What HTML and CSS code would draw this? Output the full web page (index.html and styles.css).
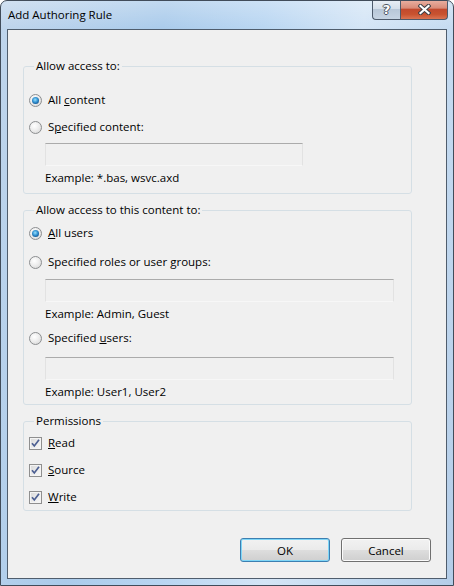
FILE: index.html
```html
<!DOCTYPE html>
<html>
<head>
<meta charset="utf-8">
<link rel="stylesheet" href="styles.css">
</head>
<body>
<div class="window">
  <div class="titlebar">
    <span class="title">Add Authoring Rule</span>
    <div class="caption-btns">
      <div class="cbtn help">?</div>
      <div class="cbtn close">
        <svg width="13" height="11" viewBox="0 0 13 11">
          <path d="M2.5 2 L10.5 9 M10.5 2 L2.5 9" stroke="#3b3f46" stroke-width="4.2" stroke-linecap="square" fill="none"/>
          <path d="M2.5 2 L10.5 9 M10.5 2 L2.5 9" stroke="#ffffff" stroke-width="2.2" stroke-linecap="square" fill="none"/>
        </svg>
      </div>
    </div>
  </div>
  <div class="client">
    <fieldset class="group g1">
      <legend>Allow access to:</legend>
      <div class="row r-first1"><span class="radio on"></span><span>All <u>c</u>ontent</span></div>
      <div class="row r-next"><span class="radio"></span><span>S<u>p</u>ecified content:</span></div>
      <div class="input w1"></div>
      <div class="example">Example: *.bas, wsvc.axd</div>
    </fieldset>

    <fieldset class="group g2">
      <legend>Allow access to this content to:</legend>
      <div class="row r-first2"><span class="radio on"></span><span><u>A</u>ll users</span></div>
      <div class="row r-roles"><span class="radio"></span><span>Specified roles or user <u>g</u>roups:</span></div>
      <div class="input w2 i-roles"></div>
      <div class="example">Example: Admin, Guest</div>
      <div class="row r-users"><span class="radio"></span><span>Specified <u>u</u>sers:</span></div>
      <div class="input w2 i-users"></div>
      <div class="example">Example: User1, User2</div>
    </fieldset>

    <fieldset class="group g3">
      <legend>Permissions</legend>
      <div class="row r-first3"><span class="check"><svg width="11" height="11" viewBox="0 0 11 11"><path d="M2 5.2 L4.3 8 L9 1.8" stroke="#4c5f92" stroke-width="1.7" fill="none"/></svg></span><span><u>R</u>ead</span></div>
      <div class="row r-chk"><span class="check"><svg width="11" height="11" viewBox="0 0 11 11"><path d="M2 5.2 L4.3 8 L9 1.8" stroke="#4c5f92" stroke-width="1.7" fill="none"/></svg></span><span><u>S</u>ource</span></div>
      <div class="row r-chk"><span class="check"><svg width="11" height="11" viewBox="0 0 11 11"><path d="M2 5.2 L4.3 8 L9 1.8" stroke="#4c5f92" stroke-width="1.7" fill="none"/></svg></span><span><u>W</u>rite</span></div>
    </fieldset>

    <div class="buttons">
      <button class="btn default">OK</button>
      <button class="btn">Cancel</button>
    </div>
  </div>
</div>
</body>
</html>
```

FILE: styles.css
```css
* { box-sizing: border-box; }
html, body { margin: 0; padding: 0; }
body {
  width: 454px;
  height: 586px;
  background: #ffffff;
  font-family: "Open Sans", "Noto Sans", sans-serif;
  font-size: 11.5px;
  line-height: 16px;
  color: #000;
}
.window {
  width: 454px;
  height: 586px;
  border: 1px solid #414c5a;
  border-radius: 7px 7px 0 0;
  display: flex;
  flex-direction: column;
  background:
    linear-gradient(to bottom, rgba(255,255,255,0.28), rgba(255,255,255,0) 28px),
    linear-gradient(100deg, #bfd5ec 0%, #aacbeb 30%, #b9d6f2 48%, #d4e5f6 66%, #c5dbf1 82%, #b4cde8 100%);
  overflow: hidden;
}
.titlebar {
  height: 28px;
  display: flex;
  align-items: flex-start;
  justify-content: space-between;
  padding-left: 7px;
  padding-right: 5px;
}
.title {
  margin-top: 6px;
  line-height: 16px;
}
.caption-btns {
  display: flex;
  margin-top: -1px;
}
.cbtn {
  height: 20px;
  border: 1px solid #4d5a6b;
  border-top: none;
  display: flex;
  align-items: center;
  justify-content: center;
}
.help {
  width: 28px;
  border-right: none;
  border-radius: 0 0 0 4px;
  background: linear-gradient(to bottom, #e9eff6 0%, #d5dfea 45%, #b8c7d8 50%, #c6d4e3 100%);
  color: #fff;
  font-weight: bold;
  font-size: 13px;
  font-family: "DejaVu Sans", sans-serif;
  text-shadow: 1px 0 0 #4a5260, -1px 0 0 #4a5260, 0 1px 0 #4a5260, 0 -1px 0 #4a5260;
  padding-top: 1px;
}
.close {
  width: 48px;
  border-radius: 0 0 4px 0;
  background: linear-gradient(to bottom, #eab2a4 0%, #d98c79 42%, #c24a2e 50%, #c8522f 75%, #da7453 100%);
}
.client {
  flex: 1;
  margin: 0 6px 6px 6px;
  border: 1px solid #4f5d6d;
  background: #f0f0f0;
  display: flex;
  flex-direction: column;
  padding: 0 0 0 15px;
}
.group {
  margin: 0;
  padding: 0 0 0 5px;
  width: 389px;
  min-width: 0;
  border: 1px solid #d5dfe5;
  border-radius: 3px;
  display: flex;
  flex-direction: column;
}
.group legend {
  margin-left: 5px;
  padding: 0 2px;
  line-height: 16px;
}
.g1 { margin-top: 28px; padding-bottom: 7px; }
.g2 { margin-top: 8px; padding-bottom: 4px; }
.g3 { margin-top: 8px; padding-bottom: 5px; }

.row {
  display: flex;
  align-items: center;
  gap: 6px;
  height: 16px;
}
.r-first1 { margin-top: 18px; }
.r-next { margin-top: 11px; }
.r-first2 { margin-top: 7px; }
.r-roles { margin-top: 13px; }
.r-users { margin-top: 8px; }
.r-first3 { margin-top: 6px; }
.r-chk { margin-top: 11px; }

.radio {
  width: 13px;
  height: 13px;
  flex: none;
  border: 1px solid #8c8e90;
  border-radius: 50%;
  background: radial-gradient(circle at 40% 35%, #ffffff 0%, #eeeeee 45%, #d2d2d2 100%);
  display: flex;
  align-items: center;
  justify-content: center;
}
.radio.on::after {
  content: "";
  width: 7px;
  height: 7px;
  border-radius: 50%;
  background: radial-gradient(circle at 45% 40%, #9be0fb 0%, #3a9ad8 40%, #145a97 75%, #0c3766 100%);
}
.check {
  width: 13px;
  height: 13px;
  flex: none;
  border: 1px solid #8f8f8f;
  background: linear-gradient(135deg, #d8d8d8 0%, #eeeeee 60%, #f8f8f8 100%);
  box-shadow: inset 0 0 0 1px #f4f4f4;
  display: flex;
  align-items: center;
  justify-content: center;
}
.check svg { display: block; }

.input {
  height: 23px;
  margin-left: 16px;
  border: 1px solid;
  border-color: #ababab #e2e2e2 #f7f7f7 #e2e2e2;
  background: #f0f0f0;
}
.w1 { width: 258px; margin-top: 8px; }
.w2 { width: 349px; }
.i-roles { margin-top: 9px; }
.i-users { margin-top: 11px; }
.example {
  margin-left: 16px;
  margin-top: 4px;
  height: 16px;
}

.buttons {
  display: flex;
  justify-content: flex-end;
  gap: 11px;
  margin-top: 27px;
  padding-right: 15px;
}
.btn {
  width: 90px;
  height: 24px;
  border: 1px solid #707070;
  border-radius: 3px;
  background: linear-gradient(to bottom, #f2f2f2 0%, #ebebeb 48%, #dddddd 52%, #cfcfcf 100%);
  box-shadow: inset 0 0 0 1px #fbfbfb;
  font-family: "Open Sans", "Noto Sans", sans-serif;
  font-size: 11.5px;
  color: #000;
  padding: 0;
}
.btn.default {
  border-color: #3c7fb1;
  box-shadow: inset 0 0 0 1px #7fd6f7;
}
```
